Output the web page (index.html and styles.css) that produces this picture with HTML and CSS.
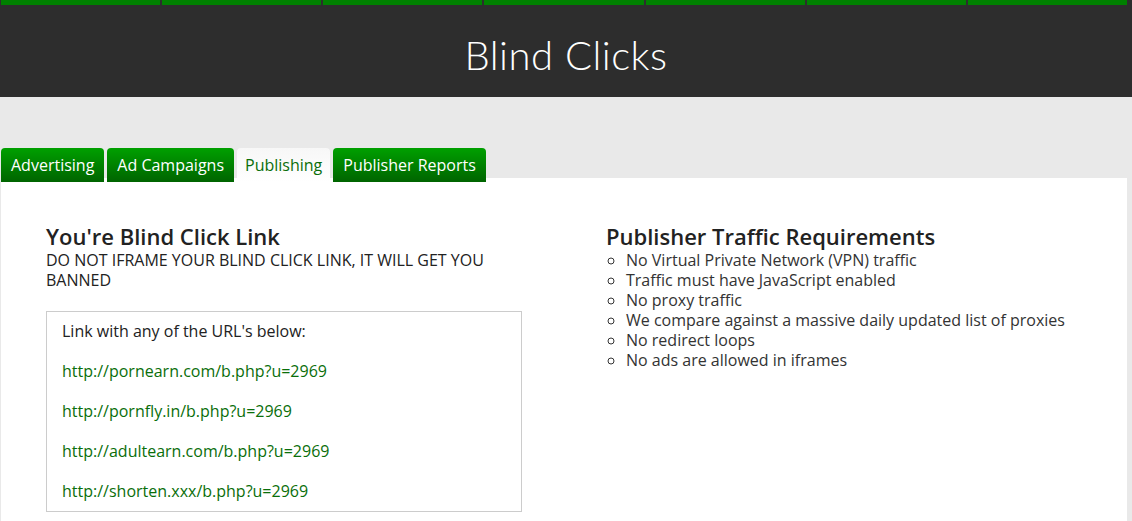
FILE: index.html
```html
<!DOCTYPE html>
<html lang="en">

<head>
    <meta charset="UTF-8">
    <meta name="viewport" content="width=device-width, initial-scale=1.0">
    <title>Blind Clicks</title>
    <link rel="stylesheet" href="styles.css">
</head>

<body>
    <div id="topnav">
        <a href="#"></a>
        <a href="#"></a>
        <a href="#"></a>
        <a href="#"></a>
        <a href="#"></a>
        <a href="#"></a>
        <a href="#"></a>
    </div>
    <div id="header">
        <h1>Blind Clicks</h1>
    </div>
    <div id="main">
        <div id="tabs">
            <a class="tab" href="#">Advertising</a>
            <a class="tab" href="#">Ad Campaigns</a>
            <a class="tab active" href="#">Publishing</a>
            <a class="tab" href="#">Publisher Reports</a>
        </div>
        <div id="panel">
            <div class="col">
                <h2>You're Blind Click Link</h2>
                <div class="warn">DO NOT IFRAME YOUR BLIND CLICK LINK, IT WILL GET YOU BANNED</div>
                <div class="link-box">
                    <div>Link with any of the URL's below:</div>
                    <a href="#">http://pornearn.com/b.php?u=2969</a>
                    <a href="#">http://pornfly.in/b.php?u=2969</a>
                    <a href="#">http://adultearn.com/b.php?u=2969</a>
                    <a href="#">http://shorten.xxx/b.php?u=2969</a>
                </div>
            </div>
            <div class="col">
                <h2>Publisher Traffic Requirements</h2>
                <ul>
                    <li>No Virtual Private Network (VPN) traffic</li>
                    <li>Traffic must have JavaScript enabled</li>
                    <li>No proxy traffic</li>
                    <li>We compare against a massive daily updated list of proxies</li>
                    <li>No redirect loops</li>
                    <li>No ads are allowed in iframes</li>
                </ul>
            </div>
        </div>
    </div>
</body>

</html>
```

FILE: styles.css
```css
body {
    margin: 0;
    font-family: "Open Sans", "Liberation Sans", sans-serif;
    background-color: #e9e9e9;
    color: #222;
    overflow: hidden;
}

#topnav {
    display: flex;
    gap: 2px;
    padding: 0 5px 0 1px;
    background-color: #2d2d2d;
}

#topnav a {
    flex: 1;
    height: 5px;
    background-color: #008000;
}

#header {
    background-color: #2d2d2d;
    height: 92px;
    display: flex;
    justify-content: center;
    align-items: center;
}

#header h1 {
    margin: 0;
    padding-top: 8px;
    color: white;
    font-family: "Lato", sans-serif;
    font-weight: 300;
    font-size: 40px;
    letter-spacing: 0.5px;
}

#main {
    padding: 51px 5px 0 1px;
}

#tabs {
    display: flex;
    gap: 2px;
    height: 34px;
    margin-bottom: -4px;
}

.tab {
    display: flex;
    align-items: center;
    padding: 0 10px;
    margin-right: 1px;
    font-size: 16px;
    color: white;
    text-decoration: none;
    border-radius: 4px 4px 0 0;
    background: linear-gradient(#00a000, #006400);
}

.tab.active {
    padding: 0 8px;
    background: linear-gradient(#f7f7f7, #ffffff);
    color: #0a6e0a;
}

#panel {
    background-color: white;
    display: grid;
    grid-template-columns: 476px 476px;
    gap: 84px;
    padding: 46px 45px 40px;
    min-height: 300px;
}

h2 {
    margin: 0 0 2px;
    font-size: 22px;
    line-height: 24px;
    font-weight: 600;
    color: #222;
}

.warn {
    font-size: 16px;
    line-height: 20px;
}

.link-box {
    margin-top: 21px;
    border: 1px solid #ccc;
    padding: 9px 15px 10px;
    display: flex;
    flex-direction: column;
    gap: 20px;
    font-size: 16px;
    line-height: 20px;
}

.link-box a {
    color: #0a6e0a;
    text-decoration: none;
}

ul {
    margin: 0;
    padding-left: 20px;
    list-style-type: circle;
    font-size: 16px;
    line-height: 20px;
    color: #333;
}
```
